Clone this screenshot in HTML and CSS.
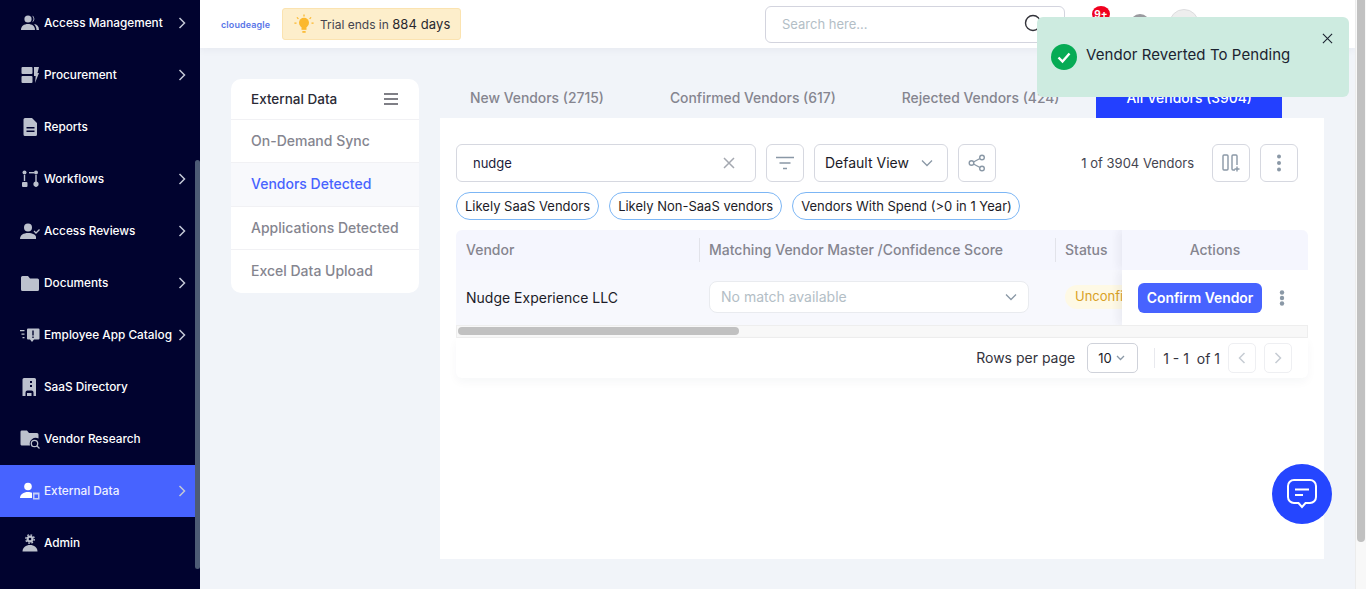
FILE: index.html
```html
<!DOCTYPE html>
<html>

<head>
    <title>External Data - Vendors Detected</title>
    <link rel="stylesheet" href="styles.css">
</head>

<body>
    <div class="app">
        <nav class="sidebar">
            <ul class="side-list">
                <li class="side-item">
                    <svg class="side-icon" viewBox="0 0 20 20"><circle cx="8" cy="6" r="3.6"/><path d="M1 17c0-4 3-6 7-6s7 2 7 6z"/><path d="M12 2.6a3.6 3.6 0 0 1 0 6.8 5 5 0 0 0 0-6.800zM14 11c3 .4 5 2.400 5 6h-2.500c0-2.400-1-4.400-2.500-6z"/></svg>
                    <span class="side-label">Access Management</span>
                    <svg class="side-arrow" viewBox="0 0 10 14"><path d="M2.500 2l5 5-5 5"/></svg>
                </li>
                <li class="side-item">
                    <svg class="side-icon" viewBox="0 0 20 20"><rect x="1.500" y="2" width="11" height="7" rx="1"/><rect x="1.500" y="11" width="11" height="7" rx="1"/><path d="M14 2h5l-1.500 6H19l-4 10 .7-7H14z"/></svg>
                    <span class="side-label">Procurement</span>
                    <svg class="side-arrow" viewBox="0 0 10 14"><path d="M2.500 2l5 5-5 5"/></svg>
                </li>
                <li class="side-item">
                    <svg class="side-icon" viewBox="0 0 20 20"><path fill-rule="evenodd" d="M5 1h7l5 5v11.500a1.500 1.500 0 0 1-1.500 1.500h-10.500a1.500 1.500 0 0 1-1.500-1.500v-15a1.500 1.500 0 0 1 1.500-1.500zM6.500 10v1.500h8v-1.500zM6.500 13.500v1.500h8v-1.500z"/></svg>
                    <span class="side-label">Reports</span>
                </li>
                <li class="side-item">
                    <svg class="side-icon" viewBox="0 0 20 20"><circle cx="4.500" cy="3.500" r="2"/><rect x="3.800" y="6" width="1.400" height="6"/><rect x="2" y="13" width="5.500" height="5" rx="1"/><rect x="9" y="3" width="5" height="1.400"/><circle cx="16" cy="3.500" r="2"/><rect x="15.300" y="6" width="1.400" height="12"/><circle cx="16" cy="15" r="2.600"/></svg>
                    <span class="side-label">Workflows</span>
                    <svg class="side-arrow" viewBox="0 0 10 14"><path d="M2.500 2l5 5-5 5"/></svg>
                </li>
                <li class="side-item">
                    <svg class="side-icon" viewBox="0 0 20 20"><circle cx="8" cy="6.500" r="4"/><path d="M0 18c0-4 3.500-6 8-6s8 2 8 4v2z"/><path class="icon-line" d="M14 10l2 2 3.500-3.500"/></svg>
                    <span class="side-label">Access Reviews</span>
                    <svg class="side-arrow" viewBox="0 0 10 14"><path d="M2.500 2l5 5-5 5"/></svg>
                </li>
                <li class="side-item">
                    <svg class="side-icon" viewBox="0 0 20 20"><path d="M2.500 3h5.500l2 2.500h7.500a1.500 1.500 0 0 1 1.500 1.500v9.500a1.500 1.500 0 0 1-1.500 1.500h-15a1.500 1.500 0 0 1-1.500-1.500v-12a1.500 1.500 0 0 1 1.500-1.500z"/></svg>
                    <span class="side-label">Documents</span>
                    <svg class="side-arrow" viewBox="0 0 10 14"><path d="M2.500 2l5 5-5 5"/></svg>
                </li>
                <li class="side-item">
                    <svg class="side-icon" viewBox="0 0 20 20"><path fill-rule="evenodd" d="M8 3.500h10.500a1 1 0 0 1 1 1v9a1 1 0 0 1-1 1h-4.500l-2 2.500-2-2.500h-2a1 1 0 0 1-1-1v-9a1 1 0 0 1 1-1zM12.300 5.500v5h1.400v-5zM12.300 11.500v1.500h1.400v-1.500z"/><path d="M0 5h4.500v1.300h-4.500zM1.500 8.500h3v1.300h-3zM2.500 12h2v1.300h-2z"/></svg>
                    <span class="side-label">Employee App Catalog</span>
                    <svg class="side-arrow" viewBox="0 0 10 14"><path d="M2.500 2l5 5-5 5"/></svg>
                </li>
                <li class="side-item">
                    <svg class="side-icon" viewBox="0 0 20 20"><path fill-rule="evenodd" d="M4 1h10.500a1.500 1.500 0 0 1 1.500 1.500v16.500h-2.500v-3.500a2 2 0 0 0-2-2h-4a2 2 0 0 0-2 2v3.500h-3v-16.500a1.500 1.500 0 0 1 1.500-1.500zM10 4v2h2v-2zM10 8v2h2v-2z"/><rect x="7" y="16" width="4.500" height="3"/></svg>
                    <span class="side-label">SaaS Directory</span>
                </li>
                <li class="side-item">
                    <svg class="side-icon" viewBox="0 0 20 20"><path d="M1.500 1.500h5.500l2 2.500h8a1.500 1.500 0 0 1 1.500 1.500v4a6 6 0 0 0-8.500 7h-8.500a1.500 1.500 0 0 1-1-1.500v-12a1.500 1.500 0 0 1 1-1.500z"/><circle class="icon-line" cx="14.500" cy="14.500" r="3.200"/><path class="icon-line" d="M17 17l2.500 2.500"/></svg>
                    <span class="side-label">Vendor Research</span>
                </li>
                <li class="side-item side-active">
                    <svg class="side-icon" viewBox="0 0 20 20"><circle cx="8" cy="5.500" r="3.800"/><path d="M0 17c0-3.500 3.500-6 8-6 1.500 0 3 .3 4 .8v5.200z"/><path class="side-mini" fill-rule="evenodd" d="M13 11.500h6.500v7h-6.500zM14.500 13.500v3.500h3.500v-3.500z"/></svg>
                    <span class="side-label">External Data</span>
                    <svg class="side-arrow" viewBox="0 0 10 14"><path d="M2.500 2l5 5-5 5"/></svg>
                </li>
                <li class="side-item">
                    <svg class="side-icon" viewBox="0 0 20 20"><circle cx="10" cy="6" r="3.500"/><circle class="icon-gear" cx="10" cy="6" r="4.200"/><path d="M2.500 18.500c0-4 3.500-6.500 7.500-6.500s7.500 2.500 7.500 6.500z"/><circle cx="10" cy="6" r="1.300" fill="#01032f"/></svg>
                    <span class="side-label">Admin</span>
                </li>
            </ul>
            <div class="side-thumb"></div>
        </nav>

        <div class="main">
            <header class="topbar">
                <span class="logo">cloudeagle</span>
                <div class="trial">
                    <svg class="trial-icon" viewBox="0 0 24 24"><circle cx="12" cy="10.500" r="6" fill="#fbb82e"/><path d="M9 15h6v4h-6z" fill="#fbb82e"/><path d="M10 20.500h4v2h-4z" fill="#fbb82e"/><path d="M12 .5v2.500M3.500 4l1.800 1.800M20.500 4l-1.800 1.800M.5 11h2.500M21 11h2.500" stroke="#fbb82e" stroke-width="1.500" fill="none"/></svg>
                    <span>Trial ends in <b>884 days</b></span>
                </div>
                <div class="top-search">
                    <span class="top-placeholder">Search here...</span>
                    <svg class="top-lens" viewBox="0 0 20 20"><circle cx="9" cy="9" r="7.500"/><path d="M14.500 14.500l4 4"/></svg>
                </div>
                <div class="top-bell"><span class="bell-badge">9+</span></div>
                <div class="top-help"></div>
                <div class="top-avatar"></div>
            </header>

            <div class="content">
                <div class="side-card">
                    <div class="card-head">
                        <span>External Data</span>
                        <svg class="card-menu" viewBox="0 0 14 12"><path d="M0 1h14M0 6h14M0 11h14"/></svg>
                    </div>
                    <div class="card-row">On-Demand Sync</div>
                    <div class="card-row card-active">Vendors Detected</div>
                    <div class="card-row">Applications Detected</div>
                    <div class="card-row">Excel Data Upload</div>
                </div>

                <div class="vendors">
                    <div class="tabs">
                        <div class="tab">New Vendors (2715)</div>
                        <div class="tab">Confirmed Vendors (617)</div>
                        <div class="tab">Rejected Vendors (424)</div>
                        <div class="tab tab-active">All Vendors (3904)</div>
                    </div>

                    <div class="panel">
                        <div class="toolbar">
                            <div class="search">
                                <span>nudge</span>
                                <svg class="search-x" viewBox="0 0 12 12"><path d="M1 1l10 10M11 1l-10 10"/></svg>
                            </div>
                            <button class="icon-btn filter-btn">
                                <svg width="18" height="14" viewBox="0 0 18 14"><path d="M0 1.500h18M3.500 7h11M7 12.500h4"/></svg>
                            </button>
                            <div class="view-select">
                                <span>Default View</span>
                                <svg width="12" height="8" viewBox="0 0 12 8"><path d="M1 1.500l5 5 5-5"/></svg>
                            </div>
                            <button class="icon-btn">
                                <svg width="18" height="18" viewBox="0 0 18 18"><circle cx="14" cy="3.500" r="2.300"/><circle cx="3.500" cy="9" r="2.300"/><circle cx="14" cy="14.500" r="2.300"/><path d="M5.500 8l6.500-3.500M5.500 10l6.500 3.500"/></svg>
                            </button>
                            <span class="count">1 of 3904 Vendors</span>
                            <button class="icon-btn">
                                <svg width="18" height="18" viewBox="0 0 18 18"><rect x="1" y="1" width="5" height="15" rx="1"/><path d="M15 11v-9a1 1 0 0 0-1-1h-3a1 1 0 0 0-1 1v13a1 1 0 0 0 1 1h2M15 12.500v5M12.500 15h5"/></svg>
                            </button>
                            <button class="icon-btn more-btn">
                                <svg width="4" height="18" viewBox="0 0 4 18"><circle cx="2" cy="2.500" r="2"/><circle cx="2" cy="9" r="2"/><circle cx="2" cy="15.500" r="2"/></svg>
                            </button>
                        </div>

                        <div class="chips">
                            <span class="chip">Likely SaaS Vendors</span>
                            <span class="chip">Likely Non-SaaS vendors</span>
                            <span class="chip">Vendors With Spend (&gt;0 in 1 Year)</span>
                        </div>

                        <div class="table">
                            <div class="t-head">Vendor</div>
                            <div class="t-head t-sep">Matching Vendor Master /Confidence Score</div>
                            <div class="t-head t-sep">Status</div>
                            <div class="t-head t-actions">Actions</div>

                            <div class="t-cell t-name">Nudge Experience LLC</div>
                            <div class="t-cell">
                                <div class="match">
                                    <span>No match available</span>
                                    <svg width="12" height="8" viewBox="0 0 12 8"><path d="M1 1.500l5 5 5-5"/></svg>
                                </div>
                            </div>
                            <div class="t-cell t-status"><span class="badge">Unconfirmed</span></div>
                            <div class="t-cell t-actions t-action-cell">
                                <button class="confirm">Confirm Vendor</button>
                                <svg class="row-more" width="6" height="16" viewBox="0 0 6 16"><circle cx="3" cy="2.500" r="2.200"/><circle cx="3" cy="8" r="2.200"/><circle cx="3" cy="13.500" r="2.200"/></svg>
                            </div>
                        </div>
                        <div class="t-scroll"><div class="t-scroll-thumb"></div></div>

                        <div class="pager">
                            <span class="rows-label">Rows per page</span>
                            <div class="rows-select">
                                <span>10</span>
                                <svg width="9" height="6" viewBox="0 0 9 6"><path d="M1 1l3.500 3.500 3.500-3.500"/></svg>
                            </div>
                            <span class="pager-sep"></span>
                            <span class="pager-range">1 - 1&nbsp; of 1</span>
                            <button class="page-btn"><svg width="8" height="12" viewBox="0 0 8 12"><path d="M6.500 1l-5 5 5 5"/></svg></button>
                            <button class="page-btn"><svg width="8" height="12" viewBox="0 0 8 12"><path d="M1.500 1l5 5-5 5"/></svg></button>
                        </div>
                    </div>
                </div>
            </div>
        </div>

        <div class="page-scroll"><div class="page-thumb"></div></div>
    </div>

    <div class="toast">
        <svg class="toast-check" viewBox="0 0 26 26"><circle cx="13" cy="13" r="13" fill="#06ab55"/><path d="M7.500 13.500l4 4 7-8" fill="none" stroke="#fff" stroke-width="2.400"/></svg>
        <span class="toast-text">Vendor Reverted To Pending</span>
        <svg class="toast-close" viewBox="0 0 12 12"><path d="M1 1l10 10M11 1l-10 10"/></svg>
    </div>

    <div class="chat">
        <svg width="34" height="34" viewBox="0 0 34 34"><path d="M9 3h16a6 6 0 0 1 6 6v11a6 6 0 0 1-6 6h-4.500l-3.500 4-3.500-4h-4.500a6 6 0 0 1-6-6v-11a6 6 0 0 1 6-6z"/><path d="M10 12.500h14M10 18h8"/></svg>
    </div>
</body>

</html>
```

FILE: styles.css
```css
* {
    box-sizing: border-box;
}

body {
    margin: 0;
    height: 589px;
    overflow: hidden;
    font-family: Inter, "Liberation Sans", sans-serif;
    font-size: 14px;
    color: #1c1c28;
    background-color: #f1f4f9;
}

button {
    font-family: inherit;
    padding: 0;
    cursor: pointer;
}

.app {
    display: flex;
    height: 589px;
}

/* left nav */
.sidebar {
    position: relative;
    flex: none;
    width: 200px;
    height: 589px;
    overflow: hidden;
    background-color: #01032f;
}

.side-list {
    list-style: none;
    margin: -3px 0 0;
    padding: 0;
    width: 195px;
}

.side-item {
    display: flex;
    align-items: center;
    height: 52px;
    padding: 0 0 1px 20px;
    color: #ffffff;
    font-size: 11.800px;
    font-weight: 500;
}

.side-active {
    background-color: #4763ff;
}

.side-icon {
    flex: none;
    width: 20px;
    height: 20px;
    margin-right: 4px;
    fill: #bcc1cd;
}

.side-active .side-icon {
    fill: #ffffff;
}

.side-active .side-mini {
    fill: #c4cdf8;
}

.icon-line {
    fill: none;
    stroke: #bcc1cd;
    stroke-width: 1.300;
}

.icon-gear {
    fill: none;
    stroke: #bcc1cd;
    stroke-width: 1.400;
    stroke-dasharray: 1.700 1.600;
}

.side-label {
    flex: 1;
    white-space: nowrap;
}

.side-active .side-label {
    color: #eef0ff;
}

.side-arrow {
    flex: none;
    width: 10px;
    height: 14px;
    margin-right: 8px;
    fill: none;
    stroke: #c3c8d6;
    stroke-width: 1.500;
}

.side-thumb {
    position: absolute;
    top: 160px;
    right: 0;
    width: 5px;
    height: 409px;
    border-radius: 3px;
    background-color: #4d5b75;
}

/* main column */
.main {
    flex: 1;
    min-width: 0;
    display: flex;
    flex-direction: column;
}

.topbar {
    flex: none;
    display: flex;
    align-items: center;
    height: 48px;
    padding-left: 21px;
    background-color: #ffffff;
    box-shadow: 0 2px 8px rgba(30, 40, 70, 0.05);
}

.logo {
    width: 61px;
    font-size: 9px;
    font-weight: 600;
    letter-spacing: 0.1px;
    color: #5a76e8;
}

.trial {
    display: flex;
    align-items: center;
    width: 179px;
    height: 32px;
    padding: 0 0 1px 11px;
    border: 1px solid #fbe3b0;
    border-radius: 3px;
    background-color: #fdeecb;
    font-size: 12px;
    color: #44444f;
}

.trial b {
    font-size: 13px;
    font-weight: 400;
    letter-spacing: 0.1px;
    color: #28282f;
}

.trial-icon {
    width: 20px;
    height: 20px;
    margin-right: 6px;
}

.top-search {
    display: flex;
    align-items: center;
    justify-content: space-between;
    width: 300px;
    height: 37px;
    margin-left: 304px;
    padding: 0 20px 0 16px;
    border: 1px solid #d3d4de;
    border-radius: 6px;
}

.top-placeholder {
    font-size: 13px;
    color: #b3bec6;
}

.top-lens {
    width: 20px;
    height: 20px;
    fill: none;
    stroke: #33333a;
    stroke-width: 1.400;
}

.top-bell {
    position: relative;
    width: 20px;
    height: 20px;
    margin-left: 27px;
}

.bell-badge {
    position: absolute;
    top: -8px;
    left: 0;
    width: 18px;
    height: 16px;
    border-radius: 50%;
    background-color: #f0011f;
    color: #ffffff;
    font-size: 10px;
    font-weight: 700;
    line-height: 16px;
    text-align: center;
}

.top-help {
    width: 20px;
    height: 20px;
    margin-left: 18px;
    border-radius: 50%;
    background-color: #9a9a9f;
}

.top-avatar {
    width: 30px;
    height: 30px;
    margin-left: 19px;
    border: 1px solid #dddddf;
    border-radius: 50%;
    background-color: #eeeeee;
}

.content {
    flex: 1;
    display: flex;
    align-items: flex-start;
    gap: 21px;
    padding: 31px 31px 30px;
    min-height: 0;
}

/* sub menu card */
.side-card {
    flex: none;
    width: 188px;
    border-radius: 10px;
    background-color: #ffffff;
    overflow: hidden;
}

.card-head {
    display: flex;
    align-items: center;
    justify-content: space-between;
    height: 41px;
    padding: 0 21px 0 20px;
    font-weight: 500;
    font-size: 13.500px;
    color: #2a2a35;
    border-bottom: 1px solid #f1f1f4;
}

.card-menu {
    width: 14px;
    height: 12px;
    fill: none;
    stroke: #55555f;
    stroke-width: 1.700;
}

.card-row {
    display: flex;
    align-items: center;
    height: 43px;
    padding: 0 0 2px 20px;
    font-weight: 500;
    color: #85858f;
    border-bottom: 1px solid #f1f1f4;
}

.card-row:last-child {
    border-bottom: none;
}

.card-active {
    height: 44px;
    color: #4763ff;
    background-color: #f8f9fc;
}

/* tabs + panel */
.vendors {
    flex: 1;
    min-width: 0;
    height: 100%;
    display: flex;
    flex-direction: column;
}

.tabs {
    flex: none;
    display: flex;
    gap: 6px;
    height: 39px;
}

.tab {
    display: flex;
    align-items: center;
    padding: 0 30px 2px;
    font-size: 13.900px;
    font-weight: 500;
    color: #85858f;
    white-space: nowrap;
}

.tab-active {
    margin-left: 1px;
    background-color: #2340ff;
    color: #ffffff;
}

.panel {
    flex: 1;
    padding: 26px 16px 0;
    background-color: #ffffff;
}

.toolbar {
    display: flex;
    align-items: center;
    height: 38px;
    padding-right: 10px;
}

.search {
    display: flex;
    align-items: center;
    justify-content: space-between;
    flex: none;
    width: 300px;
    height: 38px;
    padding: 0 20px 0 16px;
    border: 1px solid #d6d8e0;
    border-radius: 6px;
    font-size: 13px;
    color: #1b1b3a;
}

.search-x {
    width: 12px;
    height: 12px;
    fill: none;
    stroke: #a4a8b0;
    stroke-width: 1.500;
}

.icon-btn {
    display: flex;
    align-items: center;
    justify-content: center;
    flex: none;
    width: 38px;
    height: 38px;
    border: 1px solid #d6d8e0;
    border-radius: 6px;
    background-color: #ffffff;
}

.icon-btn svg {
    fill: none;
    stroke: #8a98a6;
    stroke-width: 1.400;
}

.filter-btn {
    margin-left: 10px;
}

.more-btn {
    margin-left: 10px;
}

.icon-btn.more-btn svg {
    fill: #8a98a6;
    stroke: none;
}

.view-select {
    display: flex;
    align-items: center;
    justify-content: space-between;
    flex: none;
    width: 134px;
    height: 38px;
    margin: 0 10px;
    padding: 0 14px 1px 10px;
    border: 1px solid #d6d8e0;
    border-radius: 6px;
    font-size: 14px;
    color: #1b1b28;
}

.view-select svg,
.match svg,
.rows-select svg {
    fill: none;
    stroke: #8a98a6;
    stroke-width: 1.300;
}

.count {
    margin-left: auto;
    margin-right: 18px;
    font-size: 13px;
    color: #44444f;
}

.chips {
    display: flex;
    gap: 10px;
    margin-top: 10px;
}

.chip {
    height: 28px;
    padding: 0 8px;
    border: 1px solid #7cb6f5;
    border-radius: 14px;
    font-size: 13px;
    line-height: 26px;
    color: #1c1c28;
    white-space: nowrap;
}

.chip:last-child {
    padding-right: 7px;
}

/* vendor table */
.table {
    display: grid;
    grid-template-columns: 243px 356px 67px 186px;
    grid-template-rows: 40px 55px;
    margin-top: 10px;
    border-radius: 6px 6px 0 0;
    overflow: hidden;
}

.t-head {
    display: flex;
    align-items: center;
    padding: 0 0 2px 10px;
    background-color: #f5f6fe;
    font-weight: 500;
    color: #85858f;
    white-space: nowrap;
}

.t-sep {
    position: relative;
    overflow: hidden;
}

.t-sep::before {
    content: "";
    position: absolute;
    left: 0;
    top: 8px;
    bottom: 8px;
    width: 1px;
    background-color: #e2e3ea;
}

.t-cell {
    display: flex;
    align-items: center;
    padding-left: 10px;
    background-color: #f7f8fd;
    overflow: hidden;
}

.t-name {
    padding-bottom: 1px;
    font-weight: 400;
    color: #1c1c28;
}

.match {
    display: flex;
    align-items: center;
    justify-content: space-between;
    width: 320px;
    height: 32px;
    margin-bottom: 1px;
    padding: 0 11px 1px;
    border: 1px solid #e9ebef;
    border-radius: 8px;
    background-color: #ffffff;
    color: #b3bec6;
}

.t-status {
    white-space: nowrap;
}

.badge {
    display: inline-block;
    height: 24px;
    margin-bottom: 1px;
    padding: 0 10px;
    border-radius: 12px;
    background-color: #fef9e5;
    font-size: 13px;
    color: #d9a125;
    line-height: 23px;
}

.t-actions {
    position: relative;
    justify-content: center;
    padding-left: 0;
    box-shadow: -4px 0 8px rgba(30, 40, 70, 0.06);
    clip-path: inset(0 0 0 -12px);
}

.t-action-cell {
    background-color: #ffffff;
    justify-content: flex-start;
    padding-left: 16px;
}

.confirm {
    width: 124px;
    height: 30px;
    border: none;
    border-radius: 6px;
    background-color: #4763ff;
    color: #ffffff;
    font-size: 13.900px;
    font-weight: 600;
}

.row-more {
    margin-left: 17px;
    fill: #8a98a6;
}

.t-scroll {
    height: 13px;
    border: 1px solid #eeeeee;
    background-color: #f8f8f8;
    padding: 1px 0 0 1px;
}

.t-scroll-thumb {
    width: 281px;
    height: 8px;
    border-radius: 4px;
    background-color: #c1c1c1;
}

.pager {
    display: flex;
    align-items: center;
    justify-content: flex-end;
    height: 40px;
    padding-right: 16px;
    border-radius: 0 0 6px 6px;
    box-shadow: 0 4px 10px rgba(30, 40, 70, 0.04);
}

.rows-label {
    padding-bottom: 2px;
    color: #33333d;
}

.rows-select {
    display: flex;
    align-items: center;
    justify-content: space-between;
    width: 51px;
    height: 30px;
    margin: 0 16px 0 12px;
    padding: 0 12px 0 10px;
    border: 1px solid #cfd2da;
    border-radius: 5px;
    font-size: 13px;
}

.pager-sep {
    width: 1px;
    height: 20px;
    margin-right: 8px;
    background-color: #e8e9ee;
}

.pager-range {
    margin-right: 8px;
    font-size: 14px;
    color: #33333d;
    white-space: nowrap;
}

.page-btn {
    display: flex;
    align-items: center;
    justify-content: center;
    width: 28px;
    height: 30px;
    border: 1px solid #eeeff2;
    border-radius: 5px;
    background-color: #ffffff;
}

.page-btn + .page-btn {
    margin-left: 8px;
}

.page-btn svg {
    fill: none;
    stroke: #c6ccd3;
    stroke-width: 1.500;
}

/* page scrollbar */
.page-scroll {
    flex: none;
    width: 11px;
    height: 589px;
    background-color: #f8f8f8;
    border-left: 1px solid #ececec;
}

.page-thumb {
    width: 8px;
    height: 542px;
    margin-left: 1px;
    border-radius: 0 0 4px 4px;
    background-color: #c1c1c1;
}

/* overlays */
.toast {
    position: absolute;
    top: 17px;
    left: 1037px;
    width: 312px;
    height: 80px;
    border-radius: 6px;
    background-color: #cdebe0;
}

.toast-check {
    position: absolute;
    left: 14px;
    top: 27px;
    width: 26px;
    height: 26px;
}

.toast-text {
    position: absolute;
    left: 49px;
    top: 28px;
    font-size: 15px;
    letter-spacing: 0.07px;
    color: #1b2330;
    white-space: nowrap;
}

.toast-close {
    position: absolute;
    top: 16px;
    right: 16px;
    width: 11px;
    height: 11px;
    fill: none;
    stroke: #1b2330;
    stroke-width: 1.200;
}

.chat {
    position: fixed;
    left: 1272px;
    top: 464px;
    display: flex;
    align-items: center;
    justify-content: center;
    width: 60px;
    height: 60px;
    border-radius: 50%;
    background-color: #2546ff;
}

.chat svg {
    fill: none;
    stroke: #ffffff;
    stroke-width: 2;
}
```
